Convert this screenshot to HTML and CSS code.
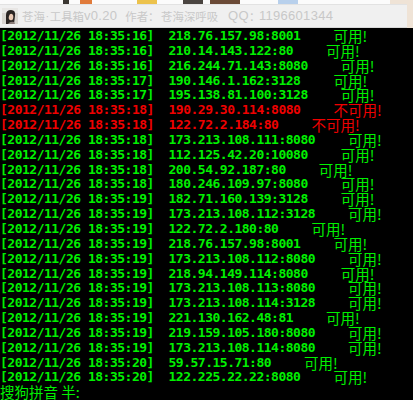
FILE: index.html
```html
<!DOCTYPE html>
<html>
<head>
<meta charset="utf-8">
<link rel="stylesheet" href="styles.css">
</head>
<body>
<div class="strip">
  <div class="frag f1"></div>
  <div class="frag f2"></div>
  <div class="frag f3"></div>
  <div class="frag f4"></div>
  <div class="frag f5"></div>
  <div class="frag f6"></div>
  <div class="frag f7"></div>
</div>
<div class="titlewrap">
  <div class="titlebar">
    <svg class="icon" width="16" height="16" viewBox="0 0 16 16">
      <rect width="16" height="16" fill="#d8d4d0"/>
      <rect x="0" y="0" width="16" height="5" fill="#e8e6e4"/>
      <path d="M4 16 L4 7 Q4 2 9 2 Q14 2 13 8 L12 16 Z" fill="#2a2422"/>
      <path d="M7 8 Q8 5 10 6 Q12 7 11 11 Q10 13 8 12 Q6 11 7 8 Z" fill="#e9c9b4"/>
      <path d="M6 16 Q8 13 12 14 L13 16 Z" fill="#8a7c78"/>
    </svg>
    <span class="cj">苍海</span><span class="dot">·</span><span class="cj">工具箱</span><span class="la">v0.20</span>
    <span class="cj gap">作者</span><span class="colon">：</span><span class="cj">苍海深呼吸</span>
    <span class="la gap2">QQ</span><span class="colon c2">：</span><span class="la">1196601344</span>
  </div>
  <div class="edge"></div>
</div>
<div class="console">
  <div class="row"><span class="ts">[2012/11/26 18:35:16]  218.76.157.98:8001</span><span class="st">可用!</span></div>
  <div class="row"><span class="ts">[2012/11/26 18:35:16]  210.14.143.122:80</span><span class="st">可用!</span></div>
  <div class="row"><span class="ts">[2012/11/26 18:35:16]  216.244.71.143:8080</span><span class="st">可用!</span></div>
  <div class="row"><span class="ts">[2012/11/26 18:35:17]  190.146.1.162:3128</span><span class="st">可用!</span></div>
  <div class="row"><span class="ts">[2012/11/26 18:35:17]  195.138.81.100:3128</span><span class="st">可用!</span></div>
  <div class="row bad"><span class="ts">[2012/11/26 18:35:18]  190.29.30.114:8080</span><span class="st">不可用!</span></div>
  <div class="row bad"><span class="ts">[2012/11/26 18:35:18]  122.72.2.184:80</span><span class="st">不可用!</span></div>
  <div class="row"><span class="ts">[2012/11/26 18:35:18]  173.213.108.111:8080</span><span class="st">可用!</span></div>
  <div class="row"><span class="ts">[2012/11/26 18:35:18]  112.125.42.20:10080</span><span class="st">可用!</span></div>
  <div class="row"><span class="ts">[2012/11/26 18:35:18]  200.54.92.187:80</span><span class="st">可用!</span></div>
  <div class="row"><span class="ts">[2012/11/26 18:35:18]  180.246.109.97:8080</span><span class="st">可用!</span></div>
  <div class="row"><span class="ts">[2012/11/26 18:35:19]  182.71.160.139:3128</span><span class="st">可用!</span></div>
  <div class="row"><span class="ts">[2012/11/26 18:35:19]  173.213.108.112:3128</span><span class="st">可用!</span></div>
  <div class="row"><span class="ts">[2012/11/26 18:35:19]  122.72.2.180:80</span><span class="st">可用!</span></div>
  <div class="row"><span class="ts">[2012/11/26 18:35:19]  218.76.157.98:8001</span><span class="st">可用!</span></div>
  <div class="row"><span class="ts">[2012/11/26 18:35:19]  173.213.108.112:8080</span><span class="st">可用!</span></div>
  <div class="row"><span class="ts">[2012/11/26 18:35:19]  218.94.149.114:8080</span><span class="st">可用!</span></div>
  <div class="row"><span class="ts">[2012/11/26 18:35:19]  173.213.108.113:8080</span><span class="st">可用!</span></div>
  <div class="row"><span class="ts">[2012/11/26 18:35:19]  173.213.108.114:3128</span><span class="st">可用!</span></div>
  <div class="row"><span class="ts">[2012/11/26 18:35:19]  221.130.162.48:81</span><span class="st">可用!</span></div>
  <div class="row"><span class="ts">[2012/11/26 18:35:19]  219.159.105.180:8080</span><span class="st">可用!</span></div>
  <div class="row"><span class="ts">[2012/11/26 18:35:19]  173.213.108.114:8080</span><span class="st">可用!</span></div>
  <div class="row"><span class="ts">[2012/11/26 18:35:20]  59.57.15.71:80</span><span class="st">可用!</span></div>
  <div class="row"><span class="ts">[2012/11/26 18:35:20]  122.225.22.22:8080</span><span class="st">可用!</span></div>
  <div class="ime">搜狗拼音 半:</div>
</div>
</body>
</html>
```
FILE: styles.css
```css
html, body {
  margin: 0;
  padding: 0;
  background: #000;
  width: 413px;
  height: 400px;
  overflow: hidden;
}
.strip {
  height: 4px;
  background: #fbfbfb;
  display: flex;
}
.frag { height: 4px; }
.f1 { margin-left: 63px; width: 6px; background: #3a3632; }
.f2 { margin-left: 11px; width: 12px; background: #e07a3a; }
.f3 { margin-left: 45px; width: 20px; background: #ecc24c; }
.f4 { margin-left: 26px; width: 20px; background: #4a4440; }
.f5 { margin-left: 7px; width: 30px; background: #6a4a36; }
.f6 { margin-left: 38px; width: 20px; background: #b8d0ec; }
.f7 { margin-left: auto; width: 23px; background: #efe3d6; }
.titlewrap {
  display: flex;
  height: 24px;
}
.titlebar {
  flex: 1;
  display: flex;
  align-items: center;
  background: #f0f0f0;
  border-top: 1px solid #e2e2e2;
  border-bottom: 1px solid #d8d8d8;
  color: #c8c8c8;
  font-family: "Liberation Sans", "Noto Sans CJK SC", sans-serif;
  font-size: 13px;
  line-height: 16px;
  white-space: pre;
}
.edge {
  width: 6px;
  background: #efe3d6;
}
.icon {
  margin-left: 2px;
  margin-right: 4px;
  flex: none;
}
.cj {
  font-family: "Noto Sans CJK SC", sans-serif;
  font-size: 11.4px;
}
.dot {
  font-family: "Liberation Sans", sans-serif;
  font-size: 11px;
  width: 5px;
  display: inline-block;
  text-align: center;
}
.la {
  letter-spacing: 0.3px;
}
.gap { margin-left: 8px; }
.gap2 { margin-left: 10px; }
.colon {
  font-family: "Noto Sans CJK SC", sans-serif;
  font-size: 11.4px;
  width: 13px;
  display: inline-block;
  overflow: hidden;
}
.c2 { width: 10px; }
.console {
  padding-top: 1px;
  font-family: "DejaVu Sans Mono", monospace;
  color: #00f000;
}
.row {
  height: 14.85px;
  line-height: 14.85px;
  display: flex;
  align-items: center;
  white-space: pre;
}
.ts {
  font-size: 13px;
  font-weight: bold;
  letter-spacing: -0.5px;
}
.st {
  margin-left: 33px;
  font-family: "Noto Sans CJK SC", sans-serif;
  font-size: 14.5px;
  line-height: 14.85px;
}
.bad { color: #f00000; }
.ime {
  font-family: "Noto Sans CJK SC", sans-serif;
  font-size: 14.5px;
  line-height: 13px;
  white-space: pre;
}
```
